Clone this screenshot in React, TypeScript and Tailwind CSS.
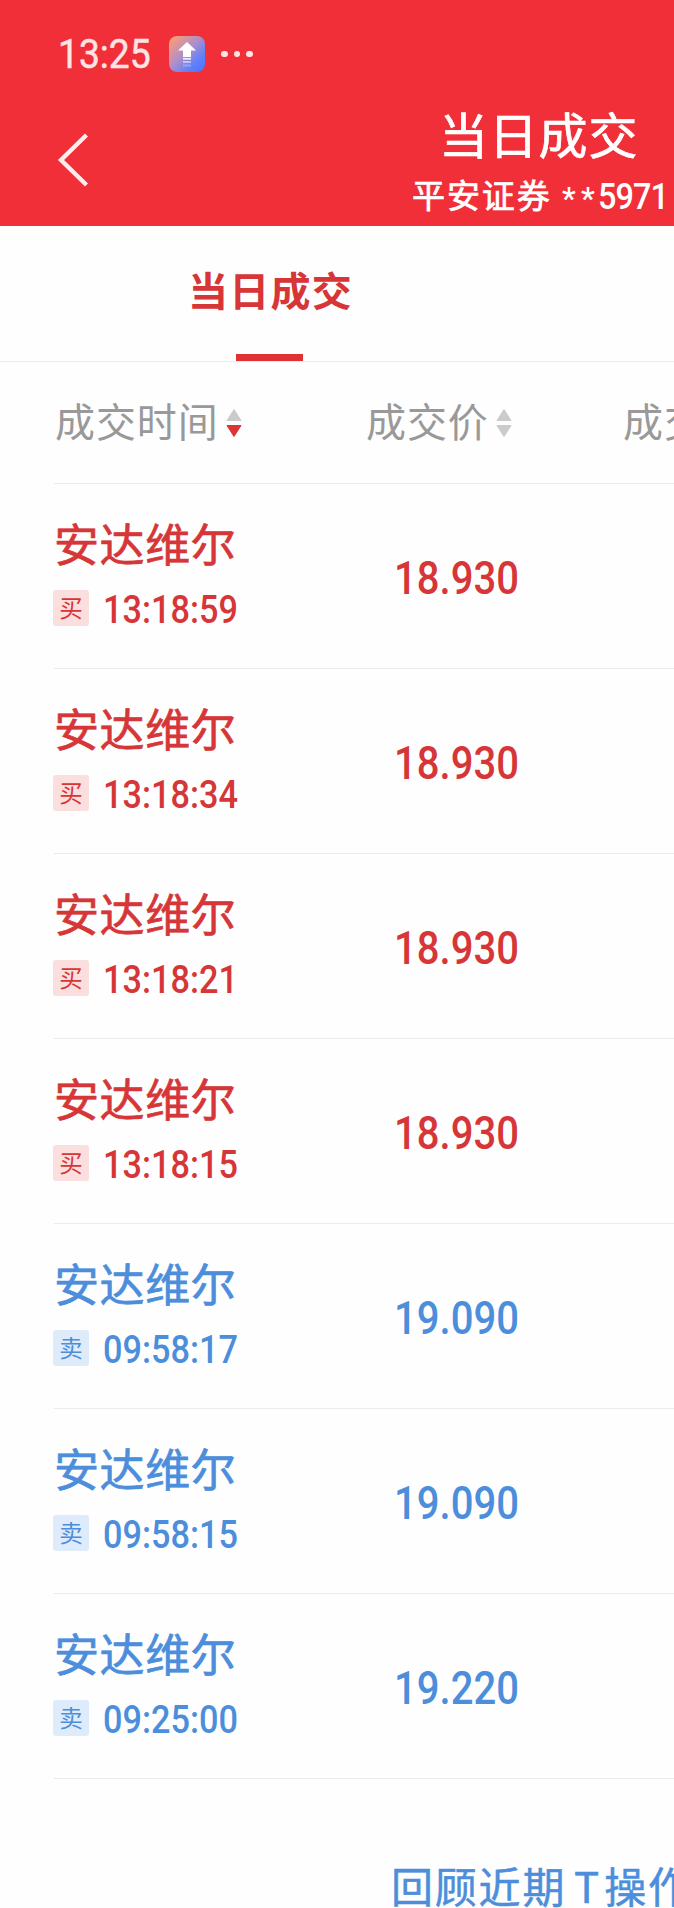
type Side = 'buy' | 'sell';

interface Trade {
  name: string;
  side: Side;
  time: string;
  price: string;
}

const trades: Trade[] = [
  { name: '安达维尔', side: 'buy', time: '13:18:59', price: '18.930' },
  { name: '安达维尔', side: 'buy', time: '13:18:34', price: '18.930' },
  { name: '安达维尔', side: 'buy', time: '13:18:21', price: '18.930' },
  { name: '安达维尔', side: 'buy', time: '13:18:15', price: '18.930' },
  { name: '安达维尔', side: 'sell', time: '09:58:17', price: '19.090' },
  { name: '安达维尔', side: 'sell', time: '09:58:15', price: '19.090' },
  { name: '安达维尔', side: 'sell', time: '09:25:00', price: '19.220' },
];

function StatusBar() {
  return (
    <div className="flex h-[108px] items-center pl-[57px] text-[#ffe4e5]">
      <span className="w-[112px] pt-[2px] pl-px font-['Roboto',sans-serif] text-[40px] leading-none [-webkit-text-stroke:0.5px]">
        <span className="inline-block origin-left scale-x-[0.93]">13:25</span>
      </span>
      <svg width="36" height="36" viewBox="0 0 36 36">
        <defs>
          <linearGradient id="app" x1="0" y1="0" x2="1" y2="1">
            <stop offset="0.05" stopColor="#ff9c72" />
            <stop offset="0.45" stopColor="#b18fc8" />
            <stop offset="0.75" stopColor="#5e80fb" />
            <stop offset="1" stopColor="#4a73ff" />
          </linearGradient>
        </defs>
        <rect width="36" height="36" rx="8" fill="url(#app)" />
        <path d="M18 6 27 14.6H22V21H14V14.6H9Z" fill="#fff" />
        <path d="M14 22.8h8" stroke="#fff" strokeWidth="1.8" opacity="0.85" />
        <path d="M14 26h8" stroke="#fff" strokeWidth="1.8" opacity="0.55" />
        <path d="M14 29.5h8" stroke="#fff" strokeWidth="2" opacity="0.25" />
      </svg>
      <div className="ml-[16px] flex gap-[6px]">
        <i className="size-[6.5px] rounded-full bg-[#ffe4e5]" />
        <i className="size-[6.5px] rounded-full bg-[#ffe4e5]" />
        <i className="size-[6.5px] rounded-full bg-[#ffe4e5]" />
      </div>
    </div>
  );
}

function TitleBar() {
  return (
    <div className="flex h-[118px]">
      <svg className="mt-[24px] ml-[56px] shrink-0" width="36" height="56" viewBox="0 0 36 56" fill="none">
        <path d="M30.5 3 5 28 30.5 53" stroke="#ffecec" strokeWidth="4.4" />
      </svg>
      <div className="ml-[320px] shrink-0 pt-px whitespace-nowrap text-white">
        <h1 className="pl-[27px] text-[49px] leading-[48px] font-normal tracking-[0.8px] [-webkit-text-stroke:0.7px]">
          当日成交
        </h1>
        <div className="mt-[17px] flex h-[40px] items-center text-[33px] leading-[40px]">
          <span className="w-[150px] tracking-[1.9px] [-webkit-text-stroke:0.7px]">平安证券</span>
          <span className="flex w-[36px] pt-[10px] font-['Roboto',sans-serif] text-[31px] font-medium">
            <span className="w-[19px]">*</span>
            <span>*</span>
          </span>
          <span className="mt-[5px] origin-left scale-x-[0.9] font-['Roboto',sans-serif] text-[36px] font-medium tracking-[-1px]">
            5971
          </span>
        </div>
      </div>
    </div>
  );
}

function SortArrows({ descending = false }: { descending?: boolean }) {
  return (
    <svg width="16" height="30" viewBox="0 0 16 30">
      <path d="M8 1.5 15 12.5H1Z" fill="#cbcbcb" stroke="#cbcbcb" strokeLinejoin="round" />
      <path
        d="M1 17.5H15L8 28.5Z"
        fill={descending ? '#dd3335' : '#cbcbcb'}
        stroke={descending ? '#dd3335' : '#cbcbcb'}
        strokeLinejoin="round"
      />
    </svg>
  );
}

function ColumnHeads() {
  return (
    <div className="ml-[54px] flex h-[122px] items-center border-b border-[#ebebeb] text-[40px] leading-none tracking-[0.9px] whitespace-nowrap text-[#999]">
      <div className="flex w-[312px] shrink-0 items-center">
        <span className="-mt-[5px] w-[172px] pl-px">成交时间</span>
        <SortArrows descending />
      </div>
      <div className="flex w-[257px] shrink-0 items-center">
        <span className="-mt-[5px] w-[130px]">成交价</span>
        <SortArrows />
      </div>
      <span className="-mt-[5px]">成交量</span>
    </div>
  );
}

function TradeRow({ name, side, time, price }: Trade) {
  const buy = side === 'buy';
  return (
    <div
      className={`ml-[54px] flex h-[185px] border-b border-[#ebebeb] ${buy ? 'text-[#d63637]' : 'text-[#4c8edb]'}`}
    >
      <div className="w-[339.5px] shrink-0 pt-[36px]">
        <div className="text-[45px] leading-[46px] tracking-[0.6px] [-webkit-text-stroke:0.7px]">{name}</div>
        <div className="mt-[24px] -ml-px flex h-[36px] items-center">
          <span
            className={`flex size-[36px] items-center justify-center rounded-[3px] text-[23.5px] leading-none ${
              buy ? 'bg-[#fbdfdf]' : 'bg-[#deebfb]'
            }`}
          >
            {buy ? '买' : '卖'}
          </span>
          <span className="mt-[4px] ml-[14px] origin-left scale-x-[0.89] font-['Roboto',sans-serif] text-[38.5px] leading-none font-medium">
            {time}
          </span>
        </div>
      </div>
      <div className="flex items-center pt-[6px]">
        <span className="origin-left scale-x-[0.88] font-['Roboto',sans-serif] text-[45.5px] leading-none font-medium">
          {price}
        </span>
      </div>
    </div>
  );
}

export default function App() {
  return (
    <div className="h-[1908px] w-[674px] overflow-hidden bg-[#fefefe] font-['Noto_Sans_CJK_SC',sans-serif]">
      <header className="h-[226px] bg-[#f12f38]">
        <StatusBar />
        <TitleBar />
      </header>
      <nav className="flex h-[136px] border-b border-[#ebebeb]">
        <div className="flex w-[539px] flex-col items-center justify-between">
          <span className="pt-[43px] pl-[2px] text-[40px] leading-[40px] font-bold tracking-[1.2px] text-[#d63637]">
            当日成交
          </span>
          <i className="h-[7px] w-[67px] bg-[#dd3335]" />
        </div>
      </nav>
      <ColumnHeads />
      {trades.map((trade) => (
        <TradeRow key={trade.time} {...trade} />
      ))}
      <div className="flex pt-[84px] pl-[391px] text-[42px] leading-[44px] tracking-[1.8px] whitespace-nowrap text-[#4c8edb] [-webkit-text-stroke:0.5px]">
        <span className="shrink-0">回顾近期</span>
        <span className="w-[38px] shrink-0 pl-[3px] text-center tracking-normal">T</span>
        <span className="shrink-0">操作</span>
      </div>
    </div>
  );
}
